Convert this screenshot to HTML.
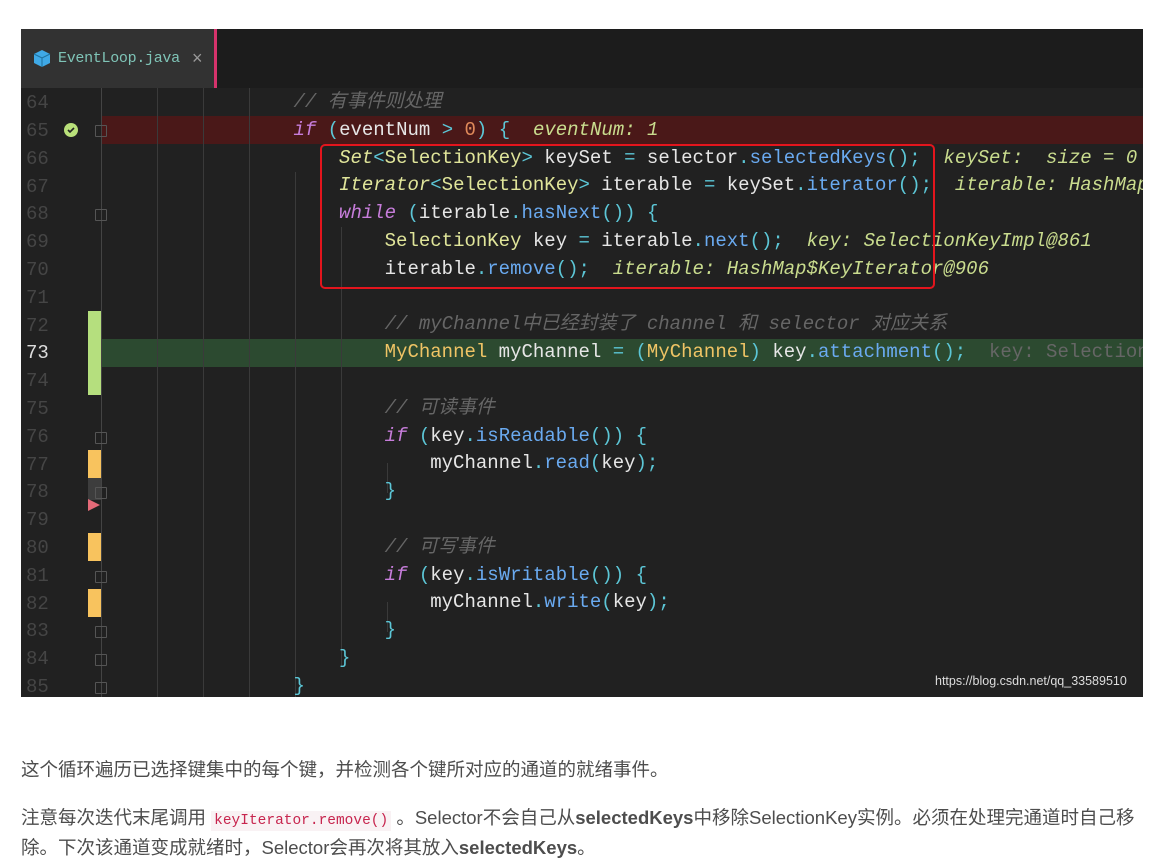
<!DOCTYPE html>
<html><head><meta charset="utf-8"><style>
body{margin:0;background:#fff;width:1157px;height:864px;overflow:hidden;font-family:"Liberation Sans","Noto Sans CJK SC",sans-serif;}
#ed{position:absolute;left:21px;top:29px;width:1122px;height:668px;background:#212121;overflow:hidden;}
#tabbar{position:absolute;left:0;top:0;width:1122px;height:59px;background:#1c1c1c;}
#tab{position:absolute;left:0;top:0;width:193px;height:59px;background:#323232;border-right:3px solid #d6336c;}
#tab span{position:absolute;left:37px;top:21px;font:15px "Liberation Mono",monospace;color:#7fc4b7;letter-spacing:-0.3px}
#tab i{position:absolute;left:171px;top:19px;font-style:normal;color:#999;font-size:18px;}
.ln{position:absolute;left:5px;width:30px;font:19px "Liberation Mono",monospace;color:#454545;}
.cl{position:absolute;left:90px;font:19px/27.8px "Liberation Mono","Noto Sans CJK SC",monospace;color:#e6e6e6;white-space:pre;}
.g{position:absolute;top:59px;width:1px;height:609px;background:#3a3a3a;}
.k{color:#c77ddb;font-style:italic}.t{color:#e0e59a;font-style:italic}.ty{color:#e0e59a}.m{color:#6aaaf0}.p{color:#5cc6d6}.c{color:#666;font-style:italic}.v{color:#c9dc8e;font-style:italic}.n{color:#e08a5a}.y{color:#efc465}
.cc{color:#666}
.bar{position:absolute;left:67px;width:13px}
.fold{position:absolute;left:74px;width:10px;height:10px;border:1px solid #555;border-radius:1px}
p{position:absolute;left:21px;margin:0;font-size:18.5px;color:#4d4d4d;white-space:nowrap}
code{font-family:"Liberation Mono",monospace;font-size:14.5px;color:#c7254e;background:#f9f2f4;padding:2px 3px}
</style></head><body>
<div id="ed">
<div id="tabbar"></div>
<div id="tab"><svg style="position:absolute;left:12px;top:20px" width="18" height="19" viewBox="0 0 18 19"><path d="M9 1 L17 5 L17 14 L9 18 L1 14 L1 5Z" fill="#3fa9e6"/><path d="M1 5 L9 9 L17 5 M9 9 V18" stroke="#1e6f9c" stroke-width="1" fill="none"/></svg><span>EventLoop.java</span><i>×</i></div>
<div style="position:absolute;left:80px;top:87px;width:1042px;height:28px;background:#4a1818"></div>
<div style="position:absolute;left:80px;top:310px;width:1042px;height:28px;background:#2c4a30"></div>
<div class="g" style="left:80px;background:#444"></div>
<div class="g" style="left:136px"></div><div class="g" style="left:182px"></div><div class="g" style="left:228px"></div>
<div style="position:absolute;left:274px;top:143px;width:1px;height:525px;background:#3a3a3a"></div>
<div style="position:absolute;left:320px;top:198px;width:1px;height:440px;background:#3a3a3a"></div>
<div style="position:absolute;left:366px;top:434px;width:1px;height:30px;background:#3a3a3a"></div>
<div style="position:absolute;left:366px;top:573px;width:1px;height:30px;background:#3a3a3a"></div>
<div class="bar" style="top:282px;height:84px;background:#b5df7e"></div>
<div class="bar" style="top:421px;height:28px;background:#f8c35e"></div>
<div class="bar" style="top:449px;height:22px;background:#3d3d3d"></div>
<div class="bar" style="top:504px;height:28px;background:#f8c35e"></div>
<div class="bar" style="top:560px;height:28px;background:#f8c35e"></div>
<svg style="position:absolute;left:67px;top:470px" width="13" height="12"><path d="M0 0 L12 6 L0 12Z" fill="#e46a78"/></svg>
<div style="position:absolute;left:43px;top:94px;width:14px;height:14px;border-radius:50%;background:#b9e07a"></div>
<svg style="position:absolute;left:43px;top:94px" width="14" height="14"><path d="M4 7 L6 9 L10 5" stroke="#222" stroke-width="1.6" fill="none"/></svg>
<div class="fold" style="top:96px"></div><div class="fold" style="top:180px"></div><div class="fold" style="top:403px"></div><div class="fold" style="top:458px"></div><div class="fold" style="top:542px"></div><div class="fold" style="top:597px"></div><div class="fold" style="top:625px"></div><div class="fold" style="top:653px"></div>
<div class="ln" style="top:63px">64</div><div class="ln" style="top:91px">65</div><div class="ln" style="top:119px">66</div><div class="ln" style="top:147px">67</div><div class="ln" style="top:174px">68</div><div class="ln" style="top:202px">69</div><div class="ln" style="top:230px">70</div><div class="ln" style="top:258px">71</div><div class="ln" style="top:286px">72</div><div class="ln" style="top:313px;color:#ddd">73</div><div class="ln" style="top:341px">74</div><div class="ln" style="top:369px">75</div><div class="ln" style="top:397px">76</div><div class="ln" style="top:425px">77</div><div class="ln" style="top:452px">78</div><div class="ln" style="top:480px">79</div><div class="ln" style="top:508px">80</div><div class="ln" style="top:536px">81</div><div class="ln" style="top:564px">82</div><div class="ln" style="top:591px">83</div><div class="ln" style="top:619px">84</div><div class="ln" style="top:647px">85</div>
<div class="cl" style="top:60px">                <span class="c">// 有事件则处理</span>
                <span class="k">if</span> <span class="p">(</span>eventNum <span class="p">&gt;</span> <span class="n">0</span><span class="p">)</span> <span class="p">{</span>  <span class="v">eventNum: 1</span>
                    <span class="t">Set</span><span class="p">&lt;</span><span class="ty">SelectionKey</span><span class="p">&gt;</span> keySet <span class="p">=</span> selector<span class="p">.</span><span class="m">selectedKeys</span><span class="p">();</span>  <span class="v">keySet:  size = 0</span>
                    <span class="t">Iterator</span><span class="p">&lt;</span><span class="ty">SelectionKey</span><span class="p">&gt;</span> iterable <span class="p">=</span> keySet<span class="p">.</span><span class="m">iterator</span><span class="p">();</span>  <span class="v">iterable: HashMap$KeyIterator@906</span>
                    <span class="k">while</span> <span class="p">(</span>iterable<span class="p">.</span><span class="m">hasNext</span><span class="p">())</span> <span class="p">{</span>
                        <span class="ty">SelectionKey</span> key <span class="p">=</span> iterable<span class="p">.</span><span class="m">next</span><span class="p">();</span>  <span class="v">key: SelectionKeyImpl@861</span>
                        iterable<span class="p">.</span><span class="m">remove</span><span class="p">();</span>  <span class="v">iterable: HashMap$KeyIterator@906</span>

                        <span class="c">// myChannel中已经封装了 channel 和 selector 对应关系</span>
                        <span class="y">MyChannel</span> myChannel <span class="p">= (</span><span class="y">MyChannel</span><span class="p">)</span> key<span class="p">.</span><span class="m">attachment</span><span class="p">();</span>  <span class="cc">key: SelectionKeyImpl@861</span>

                        <span class="c">// 可读事件</span>
                        <span class="k">if</span> <span class="p">(</span>key<span class="p">.</span><span class="m">isReadable</span><span class="p">())</span> <span class="p">{</span>
                            myChannel<span class="p">.</span><span class="m">read</span><span class="p">(</span>key<span class="p">);</span>
                        <span class="p">}</span>

                        <span class="c">// 可写事件</span>
                        <span class="k">if</span> <span class="p">(</span>key<span class="p">.</span><span class="m">isWritable</span><span class="p">())</span> <span class="p">{</span>
                            myChannel<span class="p">.</span><span class="m">write</span><span class="p">(</span>key<span class="p">);</span>
                        <span class="p">}</span>
                    <span class="p">}</span>
                <span class="p">}</span></div>
<div style="position:absolute;left:299px;top:115px;width:611px;height:141px;border:2px solid #e3151d;border-radius:5px"></div>
<div style="position:absolute;left:914px;top:645px;font-size:12.5px;color:#ddd">https://blog.csdn.net/qq_33589510</div>
</div>
<p style="top:756px">这个循环遍历已选择键集中的每个键，并检测各个键所对应的通道的就绪事件。</p>
<p style="top:804px">注意每次迭代末尾调用 <code>keyIterator.remove()</code> 。Selector不会自己从<b>selectedKeys</b>中移除SelectionKey实例。必须在处理完通道时自己移</p>
<p style="top:834px">除。下次该通道变成就绪时，Selector会再次将其放入<b>selectedKeys</b>。</p>
</body></html>
